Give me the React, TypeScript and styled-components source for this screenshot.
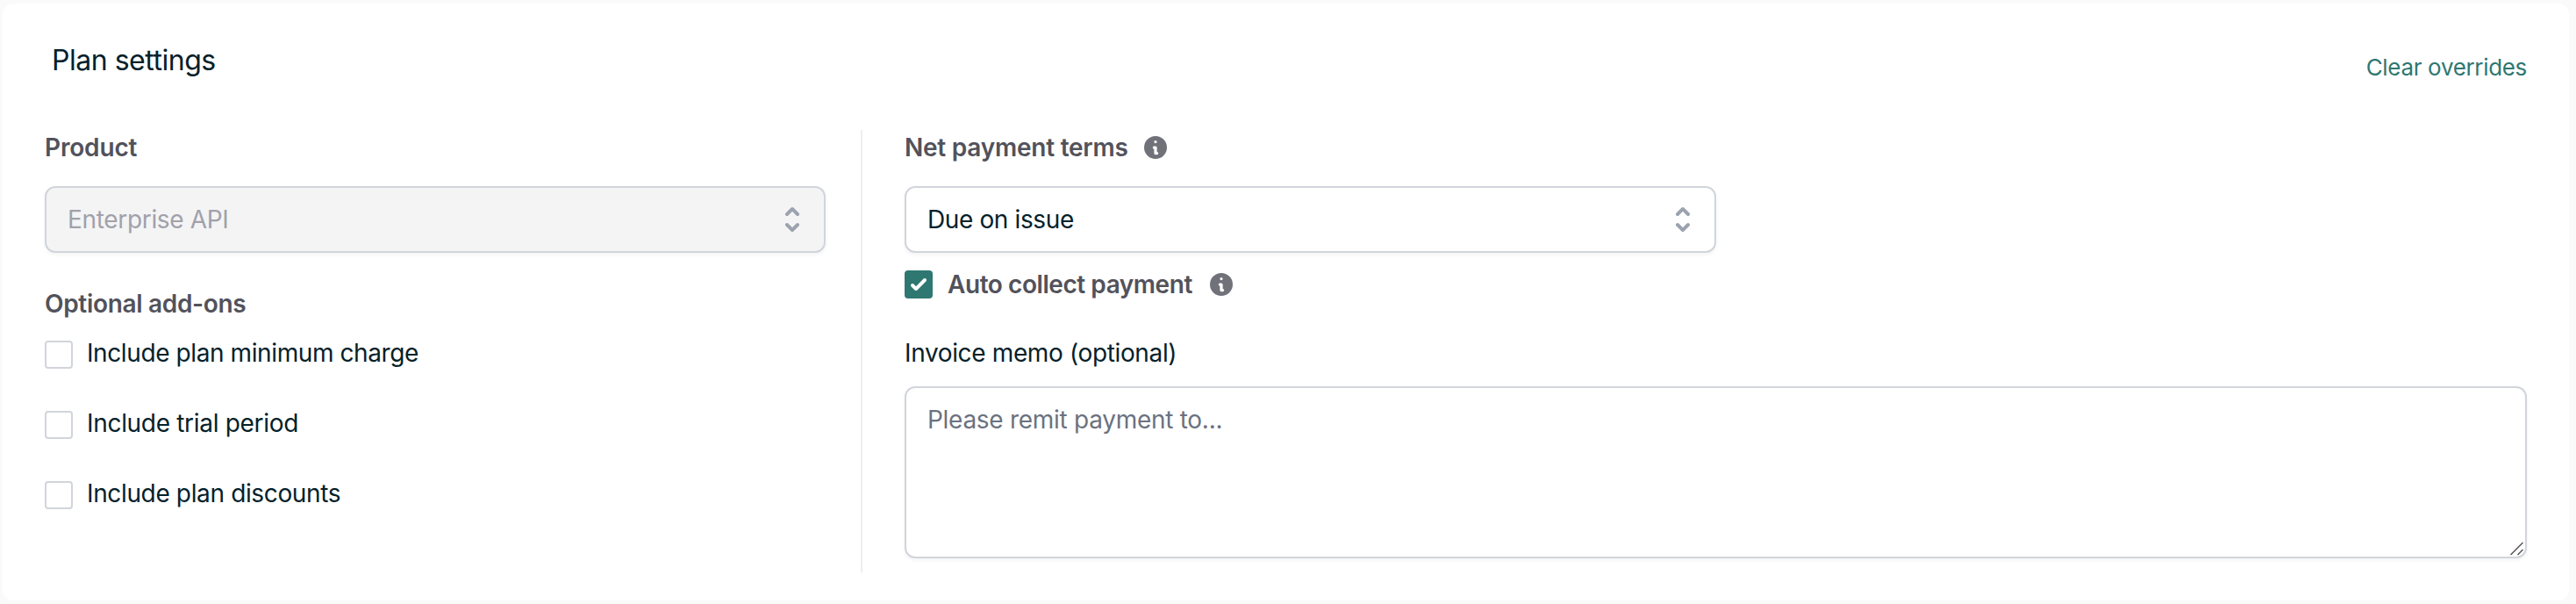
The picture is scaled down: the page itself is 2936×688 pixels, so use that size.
import React from "react";
import styled, { createGlobalStyle } from "styled-components";

const GlobalStyle = createGlobalStyle`
  *, *::before, *::after { box-sizing: border-box; }
  body {
    margin: 0;
    background: #fafafa;
    color: #05212a;
    font-family: Inter, "Liberation Sans", sans-serif;
    font-size: 28px;
    line-height: 40px;
  }
`;

const Page = styled.main`
  height: 688px;
  padding: 4px 8px 4px 3px;
`;

const Card = styled.section`
  height: 680px;
  padding: 0 48px 32px;
  display: flex;
  flex-direction: column;
  background: #fff;
  border-radius: 12px;
`;

const Header = styled.header`
  height: 144px;
  flex: none;
  display: flex;
  justify-content: space-between;
  align-items: flex-start;
`;

const Title = styled.h2`
  margin: 41px 0 0 8px;
  font-size: 32px;
  font-weight: 400;
  line-height: 48px;
  letter-spacing: -0.48px;
`;

const ClearButton = styled.button`
  margin: 53px 0 0;
  padding: 0;
  border: 0;
  background: none;
  color: #2f7771;
  font: inherit;
  font-size: 26px;
  line-height: 40px;
  letter-spacing: -0.33px;
`;

const Columns = styled.div`
  flex: 1;
  display: flex;
`;

const ProductColumn = styled.div`
  width: 932px;
  padding-right: 40px;
  border-right: 2px solid #eeeeee;
`;

const PaymentColumn = styled.div`
  flex: 1;
  padding-left: 48px;
`;

const LabelRow = styled.div<{ $gap?: number; $top?: number }>`
  display: flex;
  align-items: center;
  height: 40px;
  gap: ${(p) => p.$gap ?? 18}px;
  margin-top: ${(p) => p.$top ?? 0}px;
`;

const Label = styled.span<{ $tracking: number; $strong?: boolean }>`
  white-space: nowrap;
  color: ${(p) => (p.$strong ? "#52525b" : "inherit")};
  font-weight: ${(p) => (p.$strong ? 600 : 400)};
  letter-spacing: ${(p) => p.$tracking}px;
`;

const SelectBox = styled.div<{ $disabled?: boolean; $width?: number }>`
  width: ${(p) => (p.$width ? `${p.$width}px` : "100%")};
  height: 76px;
  margin-top: 24px;
  padding: 0 16px 0 24px;
  display: flex;
  align-items: center;
  justify-content: space-between;
  border: 2px solid #d1d5db;
  border-radius: 12px;
  background: ${(p) => (p.$disabled ? "#f4f4f5" : "#fff")};
  color: ${(p) => (p.$disabled ? "#a1a1aa" : "inherit")};
  box-shadow: 0 2px 4px rgba(0, 0, 0, 0.05);
`;

const AddOnList = styled.div`
  margin-top: 16px;
  display: flex;
  flex-direction: column;
  gap: 40px;
`;

const AddOn = styled.label`
  display: flex;
  gap: 16px;
  height: 40px;
`;

const Box = styled.span`
  width: 32px;
  height: 32px;
  margin-top: 6px;
  flex: none;
  border: 2px solid #d1d5db;
  border-radius: 4px;
  background: #fff;
`;

const CheckedBox = styled.span`
  width: 32px;
  height: 32px;
  margin-right: -3px;
  flex: none;
  display: flex;
  border-radius: 4px;
  background: #2f7771;
`;

const MemoLabel = styled.div`
  margin: 38px 0 18px;
  height: 40px;
`;

const MemoField = styled.div`
  position: relative;
  height: 196px;
`;

const Memo = styled.textarea`
  display: block;
  width: 100%;
  height: 100%;
  padding: 16px 24px;
  border: 2px solid #d1d5db;
  border-radius: 12px;
  resize: none;
  background: #fff;
  font: inherit;
  letter-spacing: -0.28px;
  box-shadow: 0 2px 4px rgba(0, 0, 0, 0.05);
  &::placeholder { color: #6b7280; opacity: 1; }
`;

const Grip = styled.svg`
  position: absolute;
  right: 3px;
  bottom: 3px;
`;

const Info = () => (
  <svg width="26" height="26" viewBox="2 2 16 16" fill="#71717a">
    <path
      fillRule="evenodd"
      clipRule="evenodd"
      d="M18 10a8 8 0 11-16 0 8 8 0 0116 0zm-7-4a1 1 0 11-2 0 1 1 0 012 0zM9 9a1 1 0 000 2v3a1 1 0 001 1h1a1 1 0 100-2v-3a1 1 0 00-1-1H9z"
    />
  </svg>
);

const Selector = () => (
  <svg width="40" height="40" viewBox="0 0 20 20" fill="#9ca3af">
    <path
      fillRule="evenodd"
      clipRule="evenodd"
      d="M10 3a1 1 0 01.707.293l3 3a1 1 0 01-1.414 1.414L10 5.414 7.707 7.707a1 1 0 01-1.414-1.414l3-3A1 1 0 0110 3zm-3.707 9.293a1 1 0 011.414 0L10 14.586l2.293-2.293a1 1 0 011.414 1.414l-3 3a1 1 0 01-1.414 0l-3-3a1 1 0 010-1.414z"
    />
  </svg>
);

const Check = () => (
  <svg width="32" height="32" viewBox="0 0 16 16" fill="#fff">
    <path d="M12.207 4.793a1 1 0 010 1.414l-5 5a1 1 0 01-1.414 0l-2-2a1 1 0 011.414-1.414L6.5 9.086l4.293-4.293a1 1 0 011.414 0z" />
  </svg>
);

const addOns = [
  { name: "Include plan minimum charge", tracking: -0.4 },
  { name: "Include trial period", tracking: -0.31 },
  { name: "Include plan discounts", tracking: -0.36 },
];

export default function App() {
  return (
    <Page>
      <GlobalStyle />
      <Card>
        <Header>
          <Title>Plan settings</Title>
          <ClearButton>Clear overrides</ClearButton>
        </Header>
        <Columns>
          <ProductColumn>
            <LabelRow>
              <Label $strong $tracking={-0.17}>Product</Label>
            </LabelRow>
            <SelectBox $disabled>
              <Label $tracking={-0.33}>Enterprise API</Label>
              <Selector />
            </SelectBox>
            <LabelRow $top={38}>
              <Label $strong $tracking={-0.32}>Optional add-ons</Label>
            </LabelRow>
            <AddOnList>
              {addOns.map((item) => (
                <AddOn key={item.name}>
                  <Box />
                  <Label $tracking={item.tracking}>{item.name}</Label>
                </AddOn>
              ))}
            </AddOnList>
          </ProductColumn>
          <PaymentColumn>
            <LabelRow>
              <Label $strong $tracking={-0.231}>Net payment terms</Label>
              <Info />
            </LabelRow>
            <SelectBox $width={925}>
              <Label $tracking={-0.38}>Due on issue</Label>
              <Selector />
            </SelectBox>
            <LabelRow $top={16} $gap={20}>
              <CheckedBox>
                <Check />
              </CheckedBox>
              <Label $strong $tracking={-0.44}>Auto collect payment</Label>
              <Info />
            </LabelRow>
            <MemoLabel>
              <Label $tracking={-0.36}>Invoice memo (optional)</Label>
            </MemoLabel>
            <MemoField>
              <Memo placeholder="Please remit payment to..." />
              <Grip width="16" height="16" viewBox="0 0 16 16" stroke="#555" strokeWidth="1.5">
                <path d="M0.5 15L14.5 1M8.5 15L14.5 9" />
              </Grip>
            </MemoField>
          </PaymentColumn>
        </Columns>
      </Card>
    </Page>
  );
}
